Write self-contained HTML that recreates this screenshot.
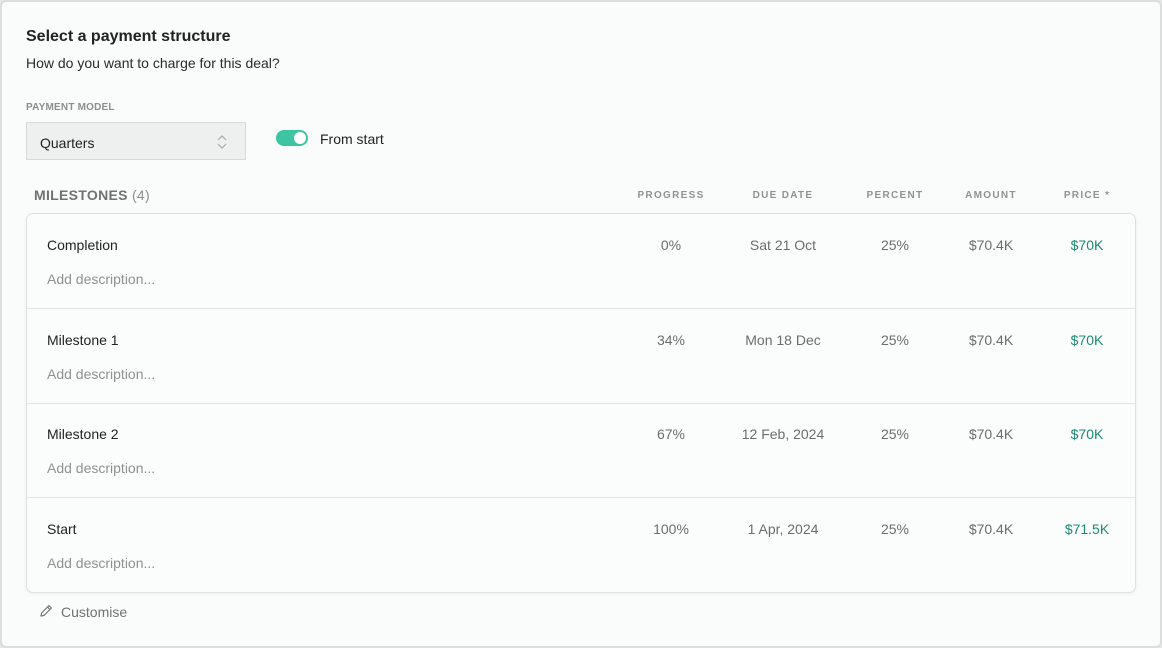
<!DOCTYPE html>
<html><head><style>
*{box-sizing:border-box;margin:0;padding:0}
body{width:1162px;height:648px;background:#e6e7e7;font-family:"Liberation Sans",sans-serif;overflow:hidden;position:relative}
.frame{position:absolute;left:0;top:0;width:1162px;height:648px;background:#fafbfb;border:2px solid #dcdede;border-radius:6px}
.wrap{position:absolute;left:0;top:0;width:1162px;height:648px}
.a{position:absolute;white-space:nowrap}
h1{position:absolute;left:26px;top:28px;font-size:16px;font-weight:bold;color:#222}
.sub{font-size:14px;color:#2a2a2a}
.lbl{font-size:10px;font-weight:bold;color:#8b8f8f;letter-spacing:.2px}
.sel{position:absolute;width:220px;height:38px;background:#eef0f0;border:1px solid #d8dada;font-size:14px;color:#222;padding:12px 13px}
.tog{position:absolute;width:32px;height:16px;border-radius:8px;background:#3ec3a3}
.tog:after{content:"";position:absolute;right:2px;top:2px;width:12px;height:12px;border-radius:50%;background:#fff}
.hd{top:190px;font-size:10px;font-weight:bold;color:#8f9393;letter-spacing:1.3px;transform:translateX(-50%)}
.card{position:absolute;left:26px;top:213px;width:1110px;height:380px;background:#fbfcfc;border:1px solid #dfe1e1;border-radius:7px;box-shadow:0 1px 3px rgba(0,0,0,.06)}
.row{position:absolute;left:0;width:100%;height:95px;border-bottom:1px solid #e2e4e4}
.t{left:20px;top:23px;font-size:14px;color:#222}
.d{left:20px;top:57px;font-size:14px;color:#8e9292}
.c{top:23px;font-size:14px;color:#6a6e6e;transform:translateX(-50%)}
.g{color:#1a8a72}
</style></head><body><div class="frame"></div><div class="wrap">
<h1>Select a payment structure</h1>
<div class="a sub" style="left:26px;top:55px">How do you want to charge for this deal?</div>
<div class="a lbl" style="left:26px;top:102px">PAYMENT MODEL</div>
<div class="sel" style="left:26px;top:122px">Quarters
<svg style="position:absolute;right:18px;top:11px" width="10" height="16" viewBox="0 0 10 16"><path d="M1 6l4-4 4 4M1 10l4 4 4-4" fill="none" stroke="#aaa" stroke-width="1.2"/></svg></div>
<div class="tog" style="left:276px;top:130px"></div>
<div class="a" style="left:320px;top:131px;font-size:14px;color:#222">From start</div>
<div class="a" style="left:34px;top:187px;font-size:14px;font-weight:bold;color:#6f7373;letter-spacing:.3px">MILESTONES <span style="font-weight:normal;color:#8a8e8e">(4)</span></div>
<div class="a hd" style="left:671px">PROGRESS</div>
<div class="a hd" style="left:783px">DUE DATE</div>
<div class="a hd" style="left:895px">PERCENT</div>
<div class="a hd" style="left:991px">AMOUNT</div>
<div class="a hd" style="left:1087px">PRICE *</div>
<div class="card">
<div class="row" style="top:0"><div class="a t">Completion</div><div class="a d">Add description...</div>
<div class="a c" style="left:644px">0%</div><div class="a c" style="left:756px">Sat 21 Oct</div><div class="a c" style="left:868px">25%</div><div class="a c" style="left:964px">$70.4K</div><div class="a c g" style="left:1060px">$70K</div></div>
<div class="row" style="top:95px"><div class="a t">Milestone 1</div><div class="a d">Add description...</div>
<div class="a c" style="left:644px">34%</div><div class="a c" style="left:756px">Mon 18 Dec</div><div class="a c" style="left:868px">25%</div><div class="a c" style="left:964px">$70.4K</div><div class="a c g" style="left:1060px">$70K</div></div>
<div class="row" style="top:189px"><div class="a t">Milestone 2</div><div class="a d">Add description...</div>
<div class="a c" style="left:644px">67%</div><div class="a c" style="left:756px">12 Feb, 2024</div><div class="a c" style="left:868px">25%</div><div class="a c" style="left:964px">$70.4K</div><div class="a c g" style="left:1060px">$70K</div></div>
<div class="row" style="top:284px;border:none"><div class="a t">Start</div><div class="a d">Add description...</div>
<div class="a c" style="left:644px">100%</div><div class="a c" style="left:756px">1 Apr, 2024</div><div class="a c" style="left:868px">25%</div><div class="a c" style="left:964px">$70.4K</div><div class="a c g" style="left:1060px">$71.5K</div></div>
</div>
<svg style="position:absolute;left:39px;top:604px" width="14" height="14" viewBox="0 0 14 14"><path d="M2 12l.6-3L10 1.6l2.4 2.4L5 11.4zM8.5 3l2.5 2.5" fill="none" stroke="#777" stroke-width="1.2" stroke-linejoin="round"/></svg>
<div class="a" style="left:61px;top:604px;font-size:14px;color:#6f7373">Customise</div>
</div></body></html>
